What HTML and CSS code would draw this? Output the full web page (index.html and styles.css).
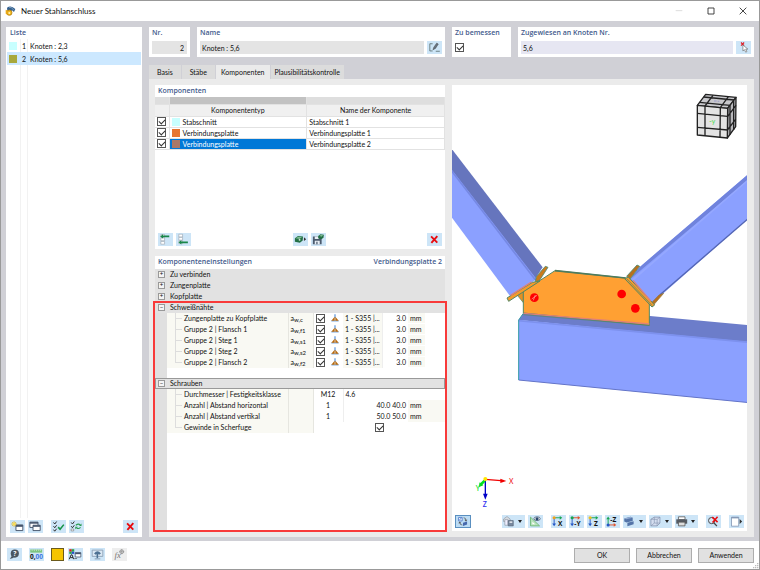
FILE: index.html
```html
<!DOCTYPE html>
<html lang="de">
<head>
  <meta charset="UTF-8">
  <meta name="viewport" content="width=device-width, initial-scale=1.0">
  <title>Neuer Stahlanschluss</title>
  <link rel="stylesheet" href="styles.css">
</head>
<body>
  <svg class="sprite" aria-hidden="true">
    <symbol id="cross" viewBox="0 0 48 40">
      <path d="M13 10l20 20M33 9L14 31" stroke="#e80c10" stroke-width="6" fill="none"/>
    </symbol>
    <symbol id="weld" viewBox="0 0 24 24">
      <path d="M12 1v12" stroke="#86b2e6" stroke-width="5"/>
      <path d="M1 23h22v-5H1z" fill="#9cc0ea"/>
      <path d="M11 8v12H1zM13 8v12h10z" fill="#b8690c"/>
    </symbol>
  </svg>

  <header class="titlebar">
    <svg class="app-icon" viewBox="0 0 33 36">
      <path d="M6 8Q18-1 31 12l-4 9-6-5-5 8-9-6z" fill="#35618f"/>
      <path d="M12 7q8-2 14 8" stroke="#9ab8d2" stroke-width="2" fill="none"/>
      <circle cx="13" cy="23" r="8" fill="#f0b51e" stroke="#a87408" stroke-width="2"/>
      <path d="M2 14l7 3-1 12-6-3z" fill="#e8a817"/>
      <circle cx="13" cy="24" r="3" fill="#fff2b0"/>
    </svg>
    <h1 class="title">Neuer Stahlanschluss</h1>
    <div class="window-buttons">
      <button class="win-btn" aria-label="Minimieren" disabled><svg viewBox="0 0 24 24"><path d="M2 11h20" stroke="#ddd" stroke-width="3"/></svg></button>
      <button class="win-btn" aria-label="Maximieren"><svg viewBox="0 0 24 24"><path d="M3 3h18v18H3z" fill="none" stroke="#222" stroke-width="2.5"/></svg></button>
      <button class="win-btn" aria-label="Schließen"><svg viewBox="0 0 24 24"><path d="M2 2l20 20M22 2L2 22" stroke="#222" stroke-width="2.5"/></svg></button>
    </div>
  </header>

  <main class="workspace">
    <section class="card list-card">
      <h2 class="card-title">Liste</h2>
      <ul class="list">
        <li class="list-item"><span class="swatch cyan"></span><span class="num">1</span><span>Knoten : 2,3</span></li>
        <li class="list-item selected"><span class="swatch olive"></span><span class="num">2</span><span>Knoten : 5,6</span></li>
      </ul>
      <div class="list-tools">
        <div class="group">
          <button class="icon-btn" aria-label="Neu">
            <svg viewBox="0 0 48 40">
              <path d="M19 15h22v18H19z" fill="#fff" stroke="#44546c" stroke-width="3"/><path d="M19 15h22v6H19z" fill="#44546c"/>
              <path d="M13 3v18M4 12h18M7 6l12 12M19 6L7 18" stroke="#e5b40e" stroke-width="2.5"/><circle cx="13" cy="12" r="4" fill="#ffe04c"/>
            </svg>
          </button>
          <button class="icon-btn" aria-label="Kopieren">
            <svg viewBox="0 0 48 40">
              <path d="M6 6h26v17H6z" fill="#fff" stroke="#44546c" stroke-width="3"/><path d="M6 6h26v5H6z" fill="#44546c"/>
              <path d="M16 16h23v17H16z" fill="#fff" stroke="#44546c" stroke-width="3"/><path d="M16 16h23v5H16z" fill="#44546c"/>
            </svg>
          </button>
        </div>
        <div class="group">
          <button class="icon-btn" aria-label="Alle auswählen">
            <svg viewBox="0 0 48 40">
              <path d="M8 7l4 5 6-8M8 19l4 5 6-8M8 30l4 5 6-8" stroke="#222" stroke-width="3" fill="none"/>
              <path d="M23 22l6 7 12-15" stroke="#159447" stroke-width="5" fill="none"/>
            </svg>
          </button>
          <button class="icon-btn" aria-label="Auswahl umkehren">
            <svg viewBox="0 0 48 40">
              <path d="M7 7l4 5 6-8M7 19l4 5 6-8" stroke="#222" stroke-width="3" fill="none"/><path d="M7 28h8v6H7z" fill="#fff" stroke="#555" stroke-width="1.5"/>
              <path d="M22 16q8-7 14-1M37 23q-7 6-13 1" stroke="#2b9d52" stroke-width="3.5" fill="none"/><path d="M40 10v8H32zM20 29V21h8z" fill="#2b9d52"/>
            </svg>
          </button>
        </div>
        <button class="icon-btn push-right" aria-label="Löschen"><svg viewBox="0 0 48 40"><use href="#cross"/></svg></button>
      </div>
    </section>

    <div class="content">
      <div class="fields">
        <div class="card field">
          <label class="card-title" for="nr">Nr.</label>
          <div class="field-row"><input class="text-input right" id="nr" value="2" readonly></div>
        </div>
        <div class="card field">
          <label class="card-title" for="name">Name</label>
          <div class="field-row">
            <input class="text-input" id="name" value="Knoten : 5,6">
            <button class="icon-btn" aria-label="Name bearbeiten">
              <svg viewBox="0 0 48 40">
                <path d="M18 8H9v23h9M28 32h13" stroke="#566" stroke-width="2.5" fill="none"/>
                <path d="M19 27l3-8L31 6l5 3-9 14z" fill="#6b7785" stroke="#333" stroke-width="1.5"/>
              </svg>
            </button>
          </div>
        </div>
        <div class="card field">
          <label class="card-title" for="design">Zu bemessen</label>
          <div class="field-row"><input type="checkbox" class="check" id="design" checked></div>
        </div>
        <div class="card field">
          <label class="card-title" for="assigned">Zugewiesen an Knoten Nr.</label>
          <div class="field-row">
            <input class="text-input lilac" id="assigned" value="5,6">
            <button class="icon-btn" aria-label="Knoten wählen">
              <svg viewBox="0 0 48 40">
                <path d="M16 4l10 10M26 4L16 14" stroke="#e01c24" stroke-width="3.5"/>
                <path d="M22 12v19l5-4 4 8 4-2-4-8h7z" fill="#fff" stroke="#666" stroke-width="2"/>
              </svg>
            </button>
          </div>
        </div>
      </div>

      <nav class="tabs">
        <button class="tab">Basis</button>
        <button class="tab">Stäbe</button>
        <button class="tab active">Komponenten</button>
        <button class="tab last">Plausibilitätskontrolle</button>
      </nav>

      <div class="panel">
        <div class="column">
          <section class="card components">
            <h2 class="card-title">Komponenten</h2>
            <table class="comp-table">
              <colgroup><col class="c-check"><col><col></colgroup>
              <thead>
                <tr class="strip"><td></td><td class="dark"></td><td></td></tr>
                <tr><th></th><th>Komponententyp</th><th>Name der Komponente</th></tr>
              </thead>
              <tbody>
                <tr><td><input type="checkbox" class="check" aria-label="Stabschnitt 1" checked></td><td><span class="type"><span class="swatch cyan"></span>Stabschnitt</span></td><td>Stabschnitt 1</td></tr>
                <tr><td><input type="checkbox" class="check" aria-label="Verbindungsplatte 1" checked></td><td><span class="type"><span class="swatch orange"></span>Verbindungsplatte</span></td><td>Verbindungsplatte 1</td></tr>
                <tr><td><input type="checkbox" class="check" aria-label="Verbindungsplatte 2" checked></td><td class="current"><span class="type"><span class="swatch brown"></span>Verbindungsplatte</span></td><td>Verbindungsplatte 2</td></tr>
              </tbody>
            </table>
            <div class="comp-tools">
              <div class="group">
                <button class="icon-btn" aria-label="Davor einfügen">
                  <svg viewBox="0 0 48 40">
                    <path d="M9 4h12v9H9zM9 15h12v9H9zM9 26h12v9H9z" fill="#fff" stroke="#9aa5b0" stroke-width="2"/>
                    <path d="M7 10l9-7v4h20v6H16v4z" fill="#19874a"/>
                  </svg>
                </button>
                <button class="icon-btn" aria-label="Danach einfügen">
                  <svg viewBox="0 0 48 40">
                    <path d="M9 3h12v9H9zM9 13h12v9H9zM9 24h12v9H9z" fill="#fff" stroke="#9aa5b0" stroke-width="2"/>
                    <path d="M8 29l9-7v4h21v6H17v4z" fill="#19874a"/>
                  </svg>
                </button>
              </div>
              <div class="group">
                <button class="icon-btn" aria-label="Bibliothek">
                  <svg viewBox="0 0 48 40">
                    <path d="M6 16l10-7 16 1-1 13-9 7-16-3z" fill="#237046"/><path d="M8 16l9-5 12 1-8 6z" fill="#7dbb92"/>
                    <circle cx="21" cy="21" r="3" fill="#d7ecdd"/><path d="M35 13l7 6-7 6z" fill="#333"/>
                  </svg>
                </button>
                <button class="icon-btn" aria-label="Speichern">
                  <svg viewBox="0 0 48 40">
                    <path d="M6 10h24l4 4v21H6z" fill="#4c5b6e"/><path d="M12 10h13v8H12zM12 24h16v11H12z" fill="#e8eef5"/><path d="M17 27h4v8h-4z" fill="#4c5b6e"/>
                    <path d="M23 9l7-6 11 2-1 9-7 5-10-3z" fill="#237046"/><path d="M27 8l6-3 6 2-6 4z" fill="#7dbb92"/>
                  </svg>
                </button>
              </div>
              <button class="icon-btn" aria-label="Komponente löschen"><svg viewBox="0 0 48 40"><use href="#cross"/></svg></button>
            </div>
          </section>

          <section class="card settings">
            <div class="settings-head">
              <h2 class="card-title">Komponenteneinstellungen</h2>
              <span class="card-title">Verbindungsplatte 2</span>
            </div>
            <table class="prop-table">
              <colgroup><col class="p-gutter"><col class="p-name"><col class="p-sym"><col class="p-check"><col class="p-icon"><col class="p-mat"><col class="p-val"><col></colgroup>
              <tbody>
                <tr class="section"><td><button class="toggle" aria-label="Zu verbinden öffnen">+</button></td><th colspan="7">Zu verbinden</th></tr>
                <tr class="section"><td><button class="toggle" aria-label="Zungenplatte öffnen">+</button></td><th colspan="7">Zungenplatte</th></tr>
                <tr class="section"><td><button class="toggle" aria-label="Kopfplatte öffnen">+</button></td><th colspan="7">Kopfplatte</th></tr>
                <tr class="section"><td><button class="toggle" aria-label="Schweißnähte schließen">−</button></td><th colspan="7">Schweißnähte</th></tr>
                <tr><td></td><td class="name">Zungenplatte zu Kopfplatte</td><td class="sym">a<sub>w,c</sub></td><td><input type="checkbox" class="check" aria-label="Zungenplatte zu Kopfplatte" checked></td><td><svg class="weld" viewBox="0 0 24 24"><use href="#weld"/></svg></td><td class="shade">1 - S355 |...</td><td class="val">3.0</td><td class="unit"><span>mm</span></td></tr>
                <tr><td></td><td class="name">Gruppe 2 | Flansch 1</td><td class="sym">a<sub>w,f1</sub></td><td><input type="checkbox" class="check" aria-label="Flansch 1" checked></td><td><svg class="weld" viewBox="0 0 24 24"><use href="#weld"/></svg></td><td class="shade">1 - S355 |...</td><td class="val">3.0</td><td class="unit"><span>mm</span></td></tr>
                <tr><td></td><td class="name">Gruppe 2 | Steg 1</td><td class="sym">a<sub>w,s1</sub></td><td><input type="checkbox" class="check" aria-label="Steg 1" checked></td><td><svg class="weld" viewBox="0 0 24 24"><use href="#weld"/></svg></td><td class="shade">1 - S355 |...</td><td class="val">3.0</td><td class="unit"><span>mm</span></td></tr>
                <tr><td></td><td class="name">Gruppe 2 | Steg 2</td><td class="sym">a<sub>w,s2</sub></td><td><input type="checkbox" class="check" aria-label="Steg 2" checked></td><td><svg class="weld" viewBox="0 0 24 24"><use href="#weld"/></svg></td><td class="shade">1 - S355 |...</td><td class="val">3.0</td><td class="unit"><span>mm</span></td></tr>
                <tr><td></td><td class="name last">Gruppe 2 | Flansch 2</td><td class="sym">a<sub>w,f2</sub></td><td><input type="checkbox" class="check" aria-label="Flansch 2" checked></td><td><svg class="weld" viewBox="0 0 24 24"><use href="#weld"/></svg></td><td class="shade">1 - S355 |...</td><td class="val">3.0</td><td class="unit"><span>mm</span></td></tr>
                <tr class="spacer"><td colspan="8"></td></tr>
                <tr class="section focused"><td><button class="toggle" aria-label="Schrauben schließen">−</button></td><th colspan="7">Schrauben</th></tr>
                <tr><td></td><td class="name">Durchmesser | Festigkeitsklasse</td><td class="sym"></td><td class="count" colspan="2">M12</td><td class="grade" colspan="3">4.6</td></tr>
                <tr><td></td><td class="name">Anzahl | Abstand horizontal</td><td class="sym"></td><td class="count" colspan="2">1</td><td class="val" colspan="2">40.0 40.0</td><td class="shade">mm</td></tr>
                <tr><td></td><td class="name">Anzahl | Abstand vertikal</td><td class="sym"></td><td class="count" colspan="2">1</td><td class="val" colspan="2">50.0 50.0</td><td class="shade">mm</td></tr>
                <tr><td></td><td class="name last">Gewinde in Scherfuge</td><td class="sym"></td><td class="thread" colspan="5"><input type="checkbox" class="check" aria-label="Gewinde in Scherfuge" checked></td></tr>
              </tbody>
            </table>
            <div class="highlight"></div>
          </section>
        </div>

        <section class="card viewer">
          <svg class="scene" viewBox="0 0 885 1281" preserveAspectRatio="xMidYMid slice">
            <!-- connection -->
            <g transform="translate(-36 195)">
              <path d="M30-10L308 352 283 390 30 54z" fill="#6675bd"/>
              <path d="M30 52L290 388 210 438 30 195z" fill="#8ba0ff"/>
              <path d="M30 56L287 391" stroke="#7689e4" stroke-width="5"/>
              <path d="M928 70L597 353 570 388 638 458 928 203z" fill="#8ba0ff"/>
              <path d="M928 70L597 353 570 388 928 86z" fill="#7083dc"/>
              <path d="M928 87L578 390" stroke="#95a8ff" stroke-width="5"/>
              <path d="M928 203L660 434" stroke="#5466b4" stroke-width="4"/>
              <path d="M236 510l14-20 380 8 298 28v52z" fill="#6c7dca"/>
              <path d="M236 510L928 576V758L236 690z" fill="#8ba0ff"/>
              <path d="M236 512L928 577" stroke="#7d91ee" stroke-width="5"/>
              <path d="M236 690L928 758" stroke="#6374c8" stroke-width="3"/>
              <path d="M250 490l-14 20v180" stroke="#339ba5" stroke-width="3" fill="none"/>
              <path d="M232 436l18-12v34z" fill="#e58f22" stroke="#4c8a72" stroke-width="2"/>
              <path d="M289 380l27-31 8 3-26 40-12 3z" fill="#c97a1c" stroke="#4c8a72" stroke-width="2.5"/>
              <path d="M560 379l31-34 8 4-29 38z" fill="#b8701e" stroke="#4c8a72" stroke-width="2.5"/>
              <path d="M638 468l33-38-14 5-21 22z" fill="#b8701e" stroke="#8a7340" stroke-width="2"/>
              <path d="M250 489V424L345 362 557 384 628 458V526z" fill="#ffa033" stroke="#548762" stroke-width="3"/>
              <path d="M345 362L557 384" stroke="#4e7b5d" stroke-width="5"/>
              <path d="M251 490L628 522" stroke="#e08078" stroke-width="4"/>
              <path d="M250 494L628 526" stroke="#548762" stroke-width="2"/>
              <path d="M201 444l76-47 23-4-94 61z" fill="#f59a2b" stroke="#548762" stroke-width="3"/>
              <path d="M212 436l62-40" stroke="#e08078" stroke-width="4"/>
              <path d="M554 386l11-5 79 84-8 6z" fill="#f59a2b" stroke="#548762" stroke-width="3"/>
              <path d="M560 386l76 80" stroke="#548762" stroke-width="2"/>
              <path d="M579 391l53 62" stroke="#e08078" stroke-width="4"/>
              <circle cx="283" cy="443" r="13" fill="#f00"/><circle cx="545" cy="432" r="13" fill="#f00"/><circle cx="586" cy="475" r="13" fill="#f00"/>
              <path d="M275 447l16-11M280 451l6-16" stroke="#ffb0a0" stroke-width="2"/>
            </g>
            <!-- view cube -->
            <g transform="translate(-36 -253)" stroke="#222" stroke-width="4" stroke-linejoin="round">
              <path d="M772 314l25-33 91 9-25 33z" fill="#c8c8cc"/>
              <path d="M863 323l25-33-1 88-25 34z" fill="#b9b9bd"/>
              <path d="M772 314l91 9-1 89-90-9z" fill="#e3e3e3"/>
              <path d="M795 316v89M841 321l-1 89M772 338l91 9M772 380l91 8" fill="none"/>
              <path d="M795 316l24-32M841 321l24-33M779 305l91 9M791 289l91 9" fill="none"/>
              <path d="M870 314v88M881 299v89M863 347l25-33M862 388l25-32" fill="none"/>
              <text class="cube-label" x="808" y="371" stroke="none">-y</text>
              <path d="M822 301h8M833 302h5" stroke="#8686c8" stroke-width="2"/>
            </g>
            <!-- axes -->
            <g transform="translate(-36 1125)">
              <path d="M136 58l47 4" stroke="#f00000" stroke-width="4"/><path d="M181 56l18 7-18 6z" fill="#f00000"/>
              <path d="M136 58v46" stroke="#0000c8" stroke-width="4"/><path d="M129 101h14l-7 18z" fill="#0000c8"/>
              <path d="M134 62l-13 13" stroke="#00e020" stroke-width="8"/><path d="M116 82l3-15 11 9z" fill="#00e020"/>
              <circle cx="136" cy="57" r="6" fill="#ffe600"/>
              <text class="axis x" x="207" y="73">X</text>
              <text class="axis y" x="107" y="92">Y</text>
              <text class="axis z" x="128" y="141">Z</text>
            </g>
          </svg>
          <div class="view-tools">
            <button class="icon-btn pressed" aria-label="Ansicht synchronisieren">
              <svg viewBox="0 0 48 40">
                <path d="M9 6h12v12H9z" fill="#fff" stroke="#4b76c8" stroke-width="3"/><path d="M12 15l6-7" stroke="#4b76c8" stroke-width="3"/>
                <path d="M26 7q8 0 8 9M22 32q-9 0-9-8" stroke="#555" stroke-width="2.5" fill="none"/><path d="M29 14h10l-5 6zM8 26h10l-5-6z" fill="#555"/>
                <path d="M24 24l14-4v10l-14 5z" fill="#4668ad"/>
              </svg>
            </button>
            <div class="group push-right">
              <button class="icon-btn wide" aria-label="Ansichten">
                <svg viewBox="0 0 48 40"><path d="M5 12l11-8 10 8v8H5z" fill="#d7dce2" stroke="#8b939e" stroke-width="2"/><path d="M9 14h10v18H9z" fill="#eef" stroke="#8b939e" stroke-width="2"/><path d="M20 17h16v17H20z" fill="#7889a0" stroke="#4e5d70" stroke-width="2"/><path d="M24 20h9v4h-9z" fill="#fff"/></svg>
                <span class="arrow"></span>
              </button>
              <button class="icon-btn" aria-label="Messen">
                <svg viewBox="0 0 48 40"><path d="M8 6v28h29z" fill="#b7e2bc" stroke="#62b36b" stroke-width="2.5"/><path d="M14 21v8h9z" fill="#fff"/><ellipse cx="29" cy="11" rx="10" ry="6" fill="#fff" stroke="#3f526f" stroke-width="2.5"/><circle cx="29" cy="11" r="5" fill="#28476f"/></svg>
              </button>
            </div>
            <div class="group">
              <button class="icon-btn" aria-label="Ansicht X">
                <svg viewBox="0 0 48 40"><path d="M10 8v20" stroke="#2458c8" stroke-width="3"/><path d="M4 26h12l-6 9z" fill="#2458c8"/><path d="M10 8h20" stroke="#18a552" stroke-width="3"/><path d="M28 2v12l8-6z" fill="#18a552"/><circle cx="10" cy="8" r="5" fill="#f0a020"/><text class="icon-text" x="22" y="35">X</text></svg>
              </button>
              <button class="icon-btn" aria-label="Ansicht -Y">
                <svg viewBox="0 0 48 40"><path d="M10 8v20" stroke="#2458c8" stroke-width="3"/><path d="M4 26h12l-6 9z" fill="#2458c8"/><path d="M10 8h20" stroke="#e0522c" stroke-width="3"/><path d="M28 2v12l8-6z" fill="#e0522c"/><circle cx="10" cy="8" r="5" fill="#18a552"/><text class="icon-text" x="17" y="35">-Y</text></svg>
              </button>
              <button class="icon-btn" aria-label="Ansicht Z">
                <svg viewBox="0 0 48 40"><path d="M10 8v20" stroke="#2458c8" stroke-width="3"/><path d="M4 26h12l-6 9z" fill="#2458c8"/><path d="M10 8h20" stroke="#18a552" stroke-width="3"/><path d="M28 2v12l8-6z" fill="#18a552"/><circle cx="10" cy="8" r="5" fill="#f0c020"/><text class="icon-text" x="22" y="35">Z</text></svg>
              </button>
              <button class="icon-btn" aria-label="Ansicht -Z">
                <svg viewBox="0 0 48 40"><path d="M10 31V12" stroke="#18a552" stroke-width="3"/><path d="M4 13h12l-6-9z" fill="#18a552"/><path d="M10 31h20" stroke="#e0522c" stroke-width="3"/><path d="M28 25v12l8-6z" fill="#e0522c"/><circle cx="10" cy="31" r="5" fill="#2458c8"/><text class="icon-text" x="17" y="22">-Z</text></svg>
              </button>
              <button class="icon-btn wide" aria-label="Darstellung">
                <svg viewBox="0 0 48 40"><path d="M4 10l20-5 7 3v10L11 23l-7-3z" fill="#5474a8"/><path d="M4 10l20-5 7 3-20 5z" fill="#91abd2"/><path d="M14 24l20-5v10l-20 6z" fill="#5474a8"/></svg>
                <span class="arrow"></span>
              </button>
              <button class="icon-btn wide" aria-label="Körper">
                <svg viewBox="0 0 48 40"><path d="M6 13l11-7h18v19l-9 9H6z" fill="#d5def0" stroke="#8492ae" stroke-width="2.5"/><path d="M6 13h20v21M26 13l9-7M17 6v19H35M17 25l-11 9" fill="none" stroke="#8492ae" stroke-width="2"/></svg>
                <span class="arrow"></span>
              </button>
              <button class="icon-btn wide" aria-label="Drucken">
                <svg viewBox="0 0 48 40"><path d="M11 5h21v9H11z" fill="#fff" stroke="#555" stroke-width="2.5"/><path d="M4 13h35v14H4z" fill="#555b63"/><path d="M11 22h21v12H11z" fill="#ddd" stroke="#555" stroke-width="2.5"/></svg>
                <span class="arrow"></span>
              </button>
            </div>
            <button class="icon-btn" aria-label="Filter zurücksetzen">
              <svg viewBox="0 0 48 40"><circle cx="18" cy="17" r="10" fill="#d8e6f4" stroke="#444" stroke-width="3"/><path d="M25 24l10 11" stroke="#444" stroke-width="4"/><path d="M20 6l17 16M37 5L21 23" stroke="#e80c10" stroke-width="5"/></svg>
            </button>
            <button class="icon-btn" aria-label="Fenster öffnen">
              <svg viewBox="0 0 48 40"><path d="M8 6h23v29H8z" fill="#fff" stroke="#7e93b2" stroke-width="2.5"/><path d="M8 6h23v4H8z" fill="#7e93b2"/><path d="M34 12l8 8-8 8z" fill="#333"/></svg>
            </button>
          </div>
        </section>
      </div>
    </div>
  </main>

  <footer class="footer">
    <div class="footer-tools">
      <button class="icon-btn" aria-label="Hilfe">
        <svg viewBox="0 0 48 40"><circle cx="25" cy="17" r="13" fill="#4b5660"/><path d="M16 24L9 34l13-4z" fill="#4b5660"/><text class="icon-text light" x="20" y="25">?</text></svg>
      </button>
      <button class="icon-btn" aria-label="Einheiten">
        <svg viewBox="0 0 48 40"><path d="M4 4h38v10H4z" fill="#7cc47f"/><path d="M10 4v5M17 4v5M24 4v5M31 4v5M37 4v5" stroke="#d8f0d8" stroke-width="2"/><text class="icon-text" x="3" y="35">0,<tspan class="blue">00</tspan></text></svg>
      </button>
      <button class="color-btn" aria-label="Farbe"></button>
      <button class="icon-btn tight" aria-label="Farbliste">
        <svg viewBox="0 0 48 40"><path d="M4 3h8v8H4z" fill="#e02020"/><path d="M12 3h8v8h-8z" fill="#28a745"/><path d="M4 11h8v7H4z" fill="#28a745"/><path d="M12 11h8v7h-8z" fill="#2850d0"/><path d="M4 35l6-14h3l5 14M7 30h9" stroke="#222" stroke-width="3" fill="none"/><path d="M23 14h18v14H23z" fill="#fff" stroke="#44546c" stroke-width="2.5"/><path d="M23 14h18v5H23z" fill="#44546c"/><path d="M20 33h9" stroke="#333" stroke-width="2"/></svg>
      </button>
      <button class="icon-btn" aria-label="Anzeige">
        <svg viewBox="0 0 48 40"><path d="M7 6h34v20H7z" fill="#dbe8f4" stroke="#8397ad" stroke-width="2.5"/><path d="M13 17q11-15 22 0l-6 4-3-3v14h-5V18l-3 3z" fill="#4d7193"/><path d="M15 34h18" stroke="#8397ad" stroke-width="3"/></svg>
      </button>
      <button class="icon-btn off" aria-label="Formel" disabled>
        <svg viewBox="0 0 48 40"><text class="formula" x="8" y="30">fx</text><circle cx="31" cy="11" r="6" fill="none" stroke="#888" stroke-width="2.5"/><path d="M23 11h16M31 3v16" stroke="#888" stroke-width="2"/></svg>
      </button>
    </div>
    <div class="actions">
      <button class="action">OK</button>
      <button class="action">Abbrechen</button>
      <button class="action">Anwenden</button>
    </div>
    <svg class="grip" viewBox="0 0 18 18"><path d="M12 0h4v4h-4zM6 6h4v4H6zM12 6h4v4h-4zM0 12h4v4H0zM6 12h4v4H6zM12 12h4v4h-4z" fill="#bbb"/></svg>
  </footer>
</body>
</html>
```

FILE: styles.css
```css
* {
  box-sizing: border-box;
}
body {
  margin: 0;
  min-height: 100vh;
  display: flex;
  flex-direction: column;
  font-family: Lato, "Open Sans", sans-serif;
  font-size: 7px;
  line-height: 10px;
  color: #111;
  background: #fff;
  border: 1px solid #999;
}
button, input {
  font: inherit;
  color: inherit;
  margin: 0;
}
button {
  padding: 0;
  border: none;
}
.sprite {
  position: absolute;
  width: 0;
  height: 0;
}

/* title bar */
.titlebar {
  display: flex;
  align-items: center;
  height: 20px;
  padding: 0 12px 0 4px;
}
.app-icon {
  width: 11px;
  height: 12px;
}
.title {
  margin: 0 0 0 5px;
  font-size: 8px;
  font-weight: 400;
}
.window-buttons {
  display: flex;
  gap: 24px;
  margin-left: auto;
}
.win-btn {
  width: 8px;
  height: 8px;
  background: none;
}
.win-btn svg {
  display: block;
}

/* layout */
.workspace {
  flex: 1;
  display: grid;
  grid-template-columns: 136px minmax(0, 1fr);
  gap: 7px;
  padding: 6px 5px 4px 5px;
  background: #d0d0d6;
}
.card {
  background: #fff;
}
.card-title {
  margin: 0;
  padding-left: 3px;
  font-family: "Open Sans", sans-serif;
  font-size: 7px;
  font-weight: 600;
  line-height: 12px;
  color: #435a8c;
}
.content {
  display: flex;
  flex-direction: column;
}
.group {
  display: flex;
  gap: 3px;
}
.push-right {
  margin-left: auto;
}

/* shared controls */
.icon-btn {
  flex: none;
  width: 15px;
  height: 13px;
  background: #cde5f7;
}
.icon-btn svg {
  display: block;
  width: 15px;
  height: 13px;
}
.icon-btn.wide {
  display: flex;
  align-items: center;
  width: 23px;
}
.icon-btn.pressed {
  display: flex;
  align-items: center;
  justify-content: center;
  width: 16px;
  background: #bcdcf4;
  border: 1px solid #5a8fc0;
}
.icon-btn.off {
  background: #eee;
}
.arrow {
  margin-left: 1px;
  border: 2px solid transparent;
  border-top: 3px solid #222;
  border-bottom: none;
}
.icon-text {
  font-family: "Open Sans", sans-serif;
  font-size: 21px;
  font-weight: 700;
  fill: #111;
}
.icon-text.light {
  fill: #fff;
}
.icon-text .blue {
  fill: #4178e0;
}
.formula {
  font-family: "Liberation Serif", serif;
  font-size: 28px;
  font-style: italic;
  fill: #777;
}
.swatch {
  flex: none;
  width: 8px;
  height: 8px;
}
.cyan { background: #c8ffff; }
.olive { background: #a8a83c; }
.orange { background: #e67530; }
.brown { background: #a87868; }
.check {
  appearance: none;
  display: block;
  width: 9px;
  height: 9px;
  background: #fff;
  border: 1px solid #555;
}
.check:checked::after {
  content: "";
  display: block;
  width: 5px;
  height: 3px;
  margin: 1px;
  border: solid #333;
  border-width: 0 0 1px 1px;
  transform: rotate(-45deg);
}

/* list */
.list-card {
  display: flex;
  flex-direction: column;
  padding: 0 1px;
}
.list {
  flex: 1;
  margin: 0;
  padding: 0;
  list-style: none;
  background: linear-gradient(90deg, transparent 13px, #f2f2f2 13px 14px, transparent 14px 20px, #f2f2f2 20px 21px, transparent 21px);
}
.list-item {
  display: flex;
  align-items: center;
  height: 13px;
  padding-left: 2px;
}
.list-item.selected {
  background: #cce8ff;
}
.list .num {
  width: 9px;
  margin-right: 4px;
  text-align: right;
}
.list-tools {
  display: flex;
  gap: 8px;
  padding: 2px 3px 4px;
}

/* header fields */
.fields {
  display: grid;
  grid-template-columns: 41px minmax(0, 248fr) 59px minmax(0, 236fr);
  gap: 7px;
  margin-bottom: 8px;
}
.field {
  padding-bottom: 3px;
}
.field .card-title {
  display: block;
  margin-bottom: 2px;
}
.field-row {
  display: flex;
  align-items: center;
  gap: 3px;
  height: 13px;
  padding: 0 3px;
}
.text-input {
  flex: 1;
  width: 100%;
  min-width: 0;
  height: 13px;
  padding: 1px 2px;
  background: #e4e4e4;
  border: none;
}
.text-input.right {
  text-align: right;
  padding-right: 3px;
}
.text-input.lilac {
  background: #e6e6f2;
}

/* tabs */
.tabs {
  display: flex;
  gap: 1px;
}
.tab {
  height: 14px;
  padding: 0 8px;
  background: #dcdcdc;
}
.tab.active {
  padding: 0 5px;
  background: #ebebeb;
}
.tab.last {
  padding: 0 4px;
}
.panel {
  flex: 1;
  display: grid;
  grid-template-columns: minmax(0, 290fr) minmax(0, 295fr);
  gap: 7px;
  padding: 6px 7px 6px 6px;
  background: #ebebeb;
}
.column {
  display: grid;
  grid-template-rows: 164fr 276fr;
  gap: 7px;
}

/* components */
.components {
  display: flex;
  flex-direction: column;
}
.comp-table, .prop-table {
  width: 100%;
  table-layout: fixed;
  border-collapse: collapse;
}
.comp-table td, .comp-table th {
  height: 11px;
  padding: 0 2px;
  font-weight: 400;
  line-height: 10px;
  border-right: 1px solid #e2e2e2;
  border-bottom: 1px solid #e2e2e2;
}
.comp-table th {
  height: 12px;
  background: #f0f0f0;
}
.comp-table .strip td {
  height: 7px;
  background: #dedede;
}
.comp-table .strip .dark {
  background: #c2c2c2;
}
.comp-table .current {
  color: #fff;
  background: #0078d7;
}
.c-check {
  width: 14px;
}
.type {
  display: flex;
  align-items: center;
  gap: 3px;
}
.comp-tools {
  display: flex;
  justify-content: space-between;
  margin-top: auto;
  padding: 3px;
}

/* settings */
.settings {
  position: relative;
  background: linear-gradient(90deg, #e0e0e0 12px, #fff 12px);
}
.settings-head {
  display: flex;
  justify-content: space-between;
  height: 13px;
  padding-right: 3px;
  background: #fff;
}
.prop-table td, .prop-table th {
  height: 11px;
  padding: 0 2px;
  font-weight: 400;
  line-height: 10px;
  white-space: nowrap;
}
.prop-table th {
  padding-left: 3px;
}
.p-gutter { width: 12px; }
.p-name { width: 121px; }
.p-sym { width: 25px; }
.p-check { width: 16px; }
.p-icon { width: 14px; }
.p-mat { width: 39px; }
.p-val { width: 26px; }
.section td, .section th {
  text-align: left;
  background: #e2e2e2;
}
.section.focused {
  outline: 1px solid #999;
  outline-offset: -1px;
}
.prop-table .spacer td {
  height: 10px;
}
.toggle {
  display: block;
  width: 7px;
  height: 7px;
  margin-left: 1px;
  font-size: 6px;
  line-height: 4px;
  background: #f4f4f4;
  border: 1px solid #999;
}
.prop-table .name {
  padding-left: 17px;
  background: linear-gradient(#ddd, #ddd) 8px 5px / 7px 1px no-repeat,
    linear-gradient(#ddd, #ddd) 8px 0 / 1px 100% no-repeat, #f9f9f3;
}
.prop-table .name.last {
  background: linear-gradient(#ddd, #ddd) 8px 5px / 7px 1px no-repeat,
    linear-gradient(#ddd, #ddd) 8px 0 / 1px 5px no-repeat, #f9f9f3;
}
.prop-table .sym {
  background: #f9f9f3;
  border-left: 1px solid #e6e6e0;
  border-right: 1px solid #e6e6e0;
}
.sym sub {
  font-size: 6px;
  line-height: 1px;
  vertical-align: -1px;
}
.weld {
  display: block;
  width: 8px;
  height: 8px;
}
.prop-table .shade {
  background: #f9f9f3;
}
.prop-table .unit {
  padding: 0;
}
.unit span {
  display: block;
  width: 17px;
  padding-left: 2px;
  background: #f9f9f3;
}
.prop-table .val {
  text-align: right;
  border-left: 1px solid #eee;
}
.prop-table .count {
  text-align: center;
  border-right: 1px solid #eee;
}
.thread .check {
  margin: 0 auto;
}
.highlight {
  position: absolute;
  top: 45px;
  right: -2px;
  bottom: -1px;
  left: -2px;
  border: 2px solid #f83a3a;
  pointer-events: none;
}

/* viewer */
.viewer {
  display: flex;
  flex-direction: column;
}
.scene {
  display: block;
  flex: 1;
  width: 100%;
  height: 0;
  min-height: 0;
}
.cube-label {
  font-size: 20px;
  font-weight: 600;
  fill: #5fdc5f;
}
.axis {
  font-size: 20px;
  font-weight: 600;
}
.axis.x { fill: #f03030; }
.axis.y { fill: #20e030; }
.axis.z { fill: #3030f0; }
.view-tools {
  display: flex;
  gap: 8px;
  padding: 3px;
}

/* footer */
.footer {
  position: relative;
  display: flex;
  align-items: center;
  justify-content: space-between;
  height: 28px;
  padding: 0 5px 0 6px;
}
.footer-tools {
  display: flex;
  align-items: center;
  gap: 7px;
  padding-bottom: 2px;
}
.color-btn {
  width: 13px;
  height: 13px;
  background: #f5c400;
  border: 1px solid #6b5a1c;
}
.icon-btn.tight {
  margin-left: -3px;
}
.actions {
  display: flex;
  gap: 6px;
}
.action {
  width: 56px;
  height: 15px;
  background: #e1e1e1;
  border: 1px solid #adadad;
}
.grip {
  position: absolute;
  right: 0;
  bottom: 0;
  width: 6px;
  height: 6px;
}
```
